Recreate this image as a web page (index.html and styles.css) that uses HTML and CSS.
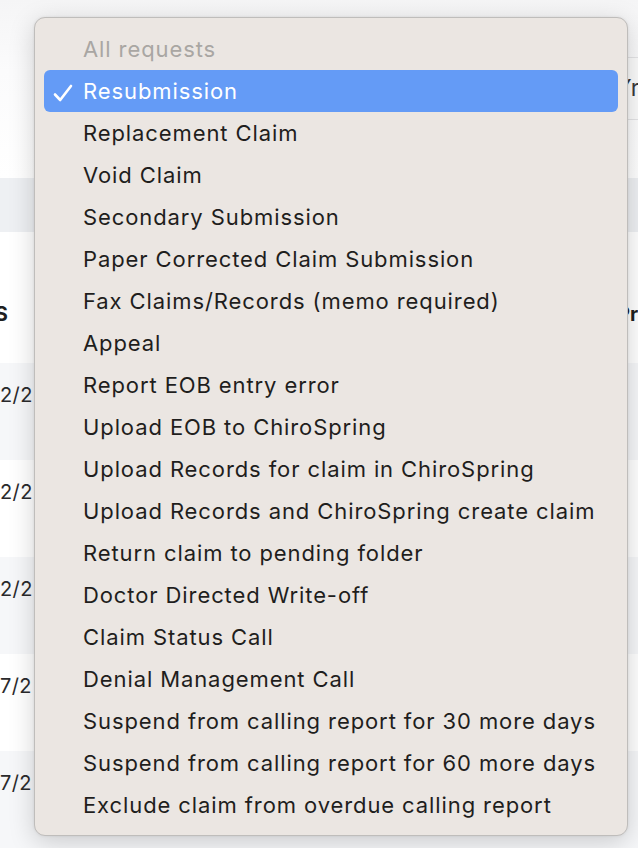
FILE: index.html
```html
<!DOCTYPE html>
<html>
<head>
<meta charset="utf-8">
<link rel="stylesheet" href="styles.css">
</head>
<body>
<div class="page">
  <div class="topbar">
    <div class="search">Yr</div>
  </div>
  <div class="band"></div>
  <div class="thead">
    <span class="th-left">DOS</span>
    <span class="th-right">Pr</span>
  </div>
  <div class="row alt"><span class="cell">2/2</span></div>
  <div class="row"><span class="cell">2/2</span></div>
  <div class="row alt"><span class="cell">2/2</span></div>
  <div class="row"><span class="cell">7/2</span></div>
  <div class="row alt"><span class="cell">7/2</span></div>
</div>

<div class="menu">
  <div class="item header">All requests</div>
  <div class="item selected"><svg class="check" width="20" height="18" viewBox="0 0 20 18"><path d="M2 10.5 L7.2 16 L18 2" fill="none" stroke="#ffffff" stroke-width="2.6" stroke-linecap="round" stroke-linejoin="round"/></svg>Resubmission</div>
  <div class="item">Replacement Claim</div>
  <div class="item">Void Claim</div>
  <div class="item">Secondary Submission</div>
  <div class="item">Paper Corrected Claim Submission</div>
  <div class="item">Fax Claims/Records (memo required)</div>
  <div class="item">Appeal</div>
  <div class="item">Report EOB entry error</div>
  <div class="item">Upload EOB to ChiroSpring</div>
  <div class="item">Upload Records for claim in ChiroSpring</div>
  <div class="item">Upload Records and ChiroSpring create claim</div>
  <div class="item">Return claim to pending folder</div>
  <div class="item">Doctor Directed Write-off</div>
  <div class="item">Claim Status Call</div>
  <div class="item">Denial Management Call</div>
  <div class="item">Suspend from calling report for 30 more days</div>
  <div class="item">Suspend from calling report for 60 more days</div>
  <div class="item">Exclude claim from overdue calling report</div>
</div>
</body>
</html>
```

FILE: styles.css
```css
html, body {
  margin: 0;
  padding: 0;
  background: #ffffff;
  overflow: hidden;
}
body {
  width: 638px;
  height: 848px;
  position: relative;
  font-family: Inter, "Liberation Sans", sans-serif;
}
.page {
  display: flex;
  flex-direction: column;
  width: 638px;
}
.topbar {
  height: 178px;
  display: flex;
  flex-direction: column;
  align-items: flex-end;
  padding-top: 57px;
  box-sizing: border-box;
  background: linear-gradient(#f5f5f6, #fbfbfc 40%, #ffffff);
}
.search {
  width: 40px;
  height: 63px;
  box-sizing: border-box;
  border: 1px solid #e4e4e6;
  border-right: none;
  background: #fbfbfb;
  font-size: 23px;
  color: #3a3a3c;
  line-height: 60px;
  padding-left: 17px;
  overflow: hidden;
  white-space: nowrap;
}
.band {
  height: 54px;
  background: #eef0f3;
}
.thead {
  height: 131px;
  display: flex;
  justify-content: space-between;
  align-items: flex-start;
  padding-top: 70px;
  box-sizing: border-box;
  font-weight: 700;
  font-size: 20px;
  color: #1f1f21;
  overflow: hidden;
}
.th-left {
  margin-left: -35px;
  white-space: nowrap;
}
.th-right {
  width: 21px;
  overflow: hidden;
  white-space: nowrap;
}
.row {
  height: 97px;
  box-sizing: border-box;
  padding-top: 20px;
  font-size: 20px;
  letter-spacing: 0.4px;
  color: #2a2a2c;
  white-space: nowrap;
  background: #ffffff;
}
.row.alt {
  background: #f6f7f9;
}
.cell {
  display: block;
}

.menu {
  position: absolute;
  left: 34px;
  top: 17px;
  width: 594px;
  height: 819px;
  box-sizing: border-box;
  padding: 10px 9px 11px 9px;
  background: #ebe6e2;
  border: 1px solid #bfbdbb;
  border-radius: 11px;
  box-shadow: 0 6px 26px rgba(0, 0, 0, 0.18), 0 0 3px rgba(0, 0, 0, 0.08);
  display: flex;
  flex-direction: column;
}
.item {
  height: 42px;
  line-height: 42px;
  padding-left: 39px;
  font-size: 22px;
  letter-spacing: 0.9px;
  color: #1f1e1d;
  border-radius: 6px;
  white-space: nowrap;
  position: relative;
}
.item.header {
  color: #a9a6a3;
}
.item.selected {
  background: #649bf6;
  color: #ffffff;
}
.check {
  position: absolute;
  left: 9px;
  top: 14px;
}
```
